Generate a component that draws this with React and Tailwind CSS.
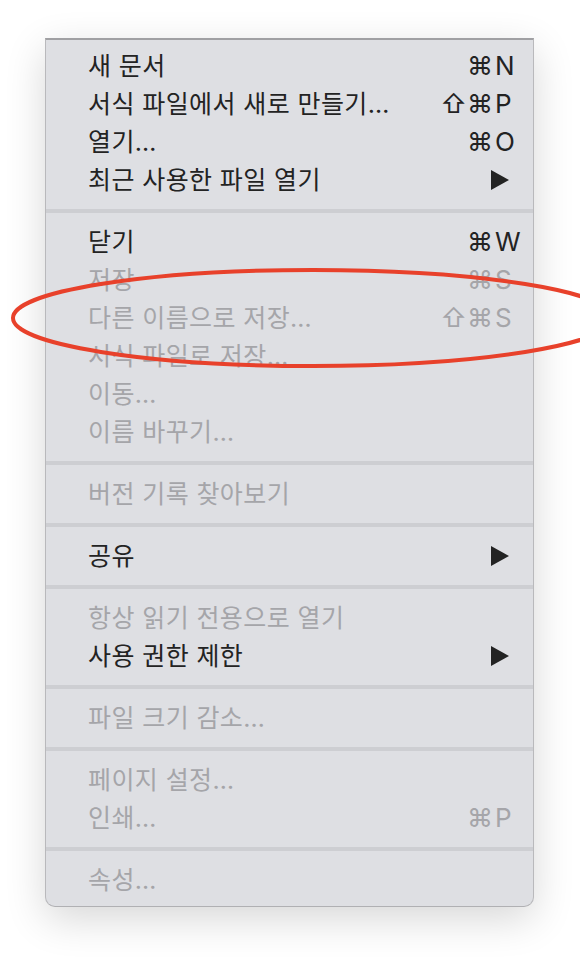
const sections = [
  [
    { label: '새 문서', mods: '⌘', key: 'N' },
    { label: '서식 파일에서 새로 만들기…', mods: '⇧⌘', key: 'P' },
    { label: '열기…', mods: '⌘', key: 'O' },
    { label: '최근 사용한 파일 열기', submenu: true },
  ],
  [
    { label: '닫기', mods: '⌘', key: 'W' },
    { label: '저장', mods: '⌘', key: 'S', disabled: true },
    { label: '다른 이름으로 저장…', mods: '⇧⌘', key: 'S', disabled: true },
    { label: '서식 파일로 저장…', disabled: true },
    { label: '이동…', disabled: true },
    { label: '이름 바꾸기…', disabled: true },
  ],
  [{ label: '버전 기록 찾아보기', disabled: true }],
  [{ label: '공유', submenu: true }],
  [
    { label: '항상 읽기 전용으로 열기', disabled: true },
    { label: '사용 권한 제한', submenu: true },
  ],
  [{ label: '파일 크기 감소…', disabled: true }],
  [
    { label: '페이지 설정…', disabled: true },
    { label: '인쇄…', mods: '⌘', key: 'P', disabled: true },
  ],
  [{ label: '속성…', disabled: true }],
];

const Triangle = () => (
  <svg width="18" height="20" viewBox="0 0 18 20" className="fill-current">
    <polygon points="0,0 18,10 0,20" />
  </svg>
);

function MenuItem({ item }) {
  return (
    <div
      className={
        'flex h-[38px] items-center justify-between pl-[42px] pr-[12px] ' +
        (item.disabled ? 'text-[#a5a5a9]' : 'text-[#232323]')
      }
    >
      <span className="text-[25px] leading-none tracking-[0.4px]">{item.label}</span>
      {item.submenu && (
        <span className="mr-[12px] flex items-center">
          <Triangle />
        </span>
      )}
      {item.key && (
        <span className="flex items-center text-[26px] leading-none">
          <span className="text-right">{item.mods}</span>
          <span className="w-[28px] pl-[2px] text-left">{item.key}</span>
        </span>
      )}
    </div>
  );
}

export default function App() {
  return (
    <div
      className="relative h-[960px] w-[580px] overflow-hidden bg-white"
      style={{ fontFamily: 'Inter, "Noto Sans CJK KR", "DejaVu Sans", sans-serif' }}
    >
      <div className="pl-[45px] pt-[38px]">
        <div className="w-[489px] rounded-b-[10px] border-x border-b border-t-2 border-x-[#b9b9bc] border-b-[#b0b0b3] border-t-[#a0a0a3] bg-[#dedfe3] py-[7px] shadow-[0_12px_40px_rgba(0,0,0,0.16)]">
          {sections.map((items, i) => (
            <div key={i}>
              {i > 0 && <div className="my-[10px] h-[4px] bg-[#cdced2]" />}
              {items.map((item) => (
                <MenuItem key={item.label} item={item} />
              ))}
            </div>
          ))}
        </div>
      </div>

      {/* red annotation ring */}
      <svg className="pointer-events-none absolute left-0 top-0" width="580" height="960">
        <ellipse cx="313" cy="318" rx="300" ry="48" fill="none" stroke="#e8412b" strokeWidth="4" />
      </svg>
    </div>
  );
}
